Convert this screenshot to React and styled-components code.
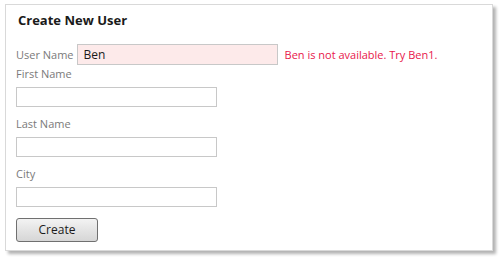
import React from 'react';
import styled, { createGlobalStyle } from 'styled-components';

const GlobalStyle = createGlobalStyle`
  html, body {
    margin: 0;
    padding: 0;
    background: #ffffff;
  }
  body {
    font-family: 'Open Sans', 'Noto Sans', sans-serif;
  }
`;

const Page = styled.div`
  width: 501px;
  height: 260px;
  padding: 4px 0 0 5px;
  box-sizing: border-box;
`;

const Panel = styled.div`
  width: 488px;
  height: 247px;
  box-sizing: border-box;
  border: 1px solid #d9d9d9;
  background: #ffffff;
  box-shadow: 3px 3px 3px rgba(0, 0, 0, 0.3);
  padding: 7px 10px 0 10px;
`;

const Title = styled.h2`
  margin: 0 0 16px 2px;
  font-size: 13px;
  font-weight: 700;
  color: #1a1a1a;
  line-height: 16px;
`;

const UserRow = styled.div`
  display: flex;
  align-items: center;
  margin-bottom: 1px;
`;

const Field = styled.div`
  display: flex;
  flex-direction: column;
  margin-bottom: ${(p) => p.gap || 9}px;
`;

const Label = styled.label`
  font-size: 11px;
  color: #7a7a7a;
  line-height: 16px;
  margin-right: ${(p) => (p.inline ? 3 : 0)}px;
  margin-bottom: ${(p) => (p.inline ? 0 : 5)}px;
`;

const Input = styled.input`
  width: 201px;
  height: ${(p) => (p.invalid ? 21 : 20)}px;
  box-sizing: border-box;
  border: 1px solid #c8c8c8;
  background: ${(p) => (p.invalid ? '#fdeaea' : '#ffffff')};
  font-family: inherit;
  font-size: 12px;
  color: #1a1a1a;
  padding: 0 6px;
  margin: 0;
  outline: none;
`;

const Error = styled.span`
  font-size: 11px;
  color: #e8174b;
  margin-left: 7px;
`;

const Button = styled.button`
  width: 82px;
  height: 24px;
  border: 1px solid #707070;
  border-radius: 3px;
  background: linear-gradient(#f3f3f3, #e4e4e4 50%, #d6d6d6);
  font-family: inherit;
  font-size: 12px;
  color: #1a1a1a;
  padding: 0;
  margin: 0;
`;

export default function App() {
  return (
    <Page>
      <GlobalStyle />
      <Panel>
        <Title>Create New User</Title>
        <UserRow>
          <Label inline>User Name</Label>
          <Input invalid defaultValue="Ben" />
          <Error>Ben is not available. Try Ben1.</Error>
        </UserRow>
        <Field>
          <Label>First Name</Label>
          <Input />
        </Field>
        <Field>
          <Label>Last Name</Label>
          <Input />
        </Field>
        <Field gap={10}>
          <Label>City</Label>
          <Input />
        </Field>
        <Button>Create</Button>
      </Panel>
    </Page>
  );
}
